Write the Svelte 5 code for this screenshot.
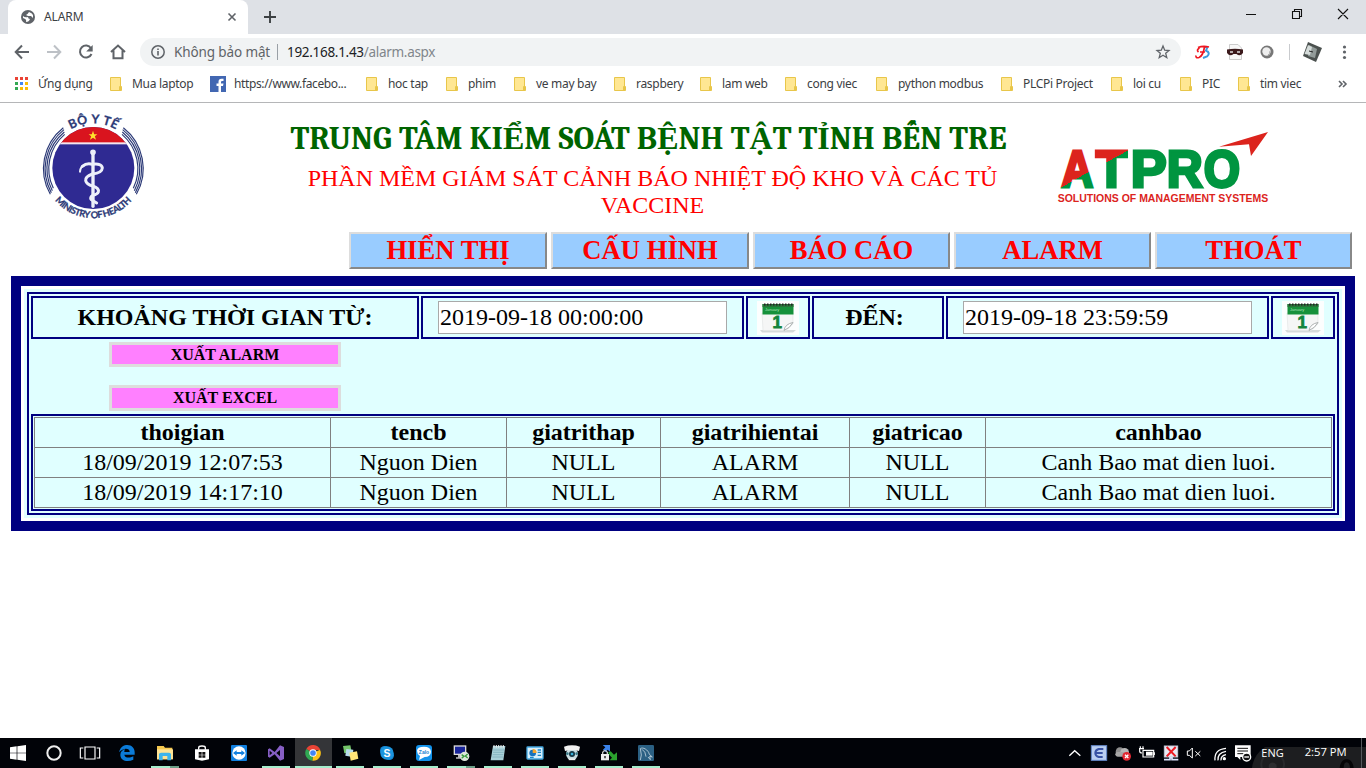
<script>
  const bookmarks = [
    { t: 'Ứng dụng', k: 'apps', w: 95, g: 23 },
    { t: 'Mua laptop', k: 'folder', w: 100, g: 22 },
    { t: 'https://www.facebo...', k: 'fb', w: 156, g: 24 },
    { t: 'hoc tap', k: 'folder', w: 80, g: 22 },
    { t: 'phim', k: 'folder', w: 68, g: 22 },
    { t: 've may bay', k: 'folder', w: 100, g: 22 },
    { t: 'raspbery', k: 'folder', w: 86, g: 22 },
    { t: 'lam web', k: 'folder', w: 85, g: 22 },
    { t: 'cong viec', k: 'folder', w: 91, g: 22 },
    { t: 'python modbus', k: 'folder', w: 125, g: 22 },
    { t: 'PLCPi Project', k: 'folder', w: 110, g: 22 },
    { t: 'loi cu', k: 'folder', w: 69, g: 22 },
    { t: 'PIC', k: 'folder', w: 58, g: 22 },
    { t: 'tim viec', k: 'folder', w: 80, g: 22 }
  ];
  const menu = ['HIỂN THỊ', 'CẤU HÌNH', 'BÁO CÁO', 'ALARM', 'THOÁT'];
  const columns = ['thoigian', 'tencb', 'giatrithap', 'giatrihientai', 'giatricao', 'canhbao'];
  const rows = [
    ['18/09/2019 12:07:53', 'Nguon Dien', 'NULL', 'ALARM', 'NULL', 'Canh Bao mat dien luoi.'],
    ['18/09/2019 14:17:10', 'Nguon Dien', 'NULL', 'ALARM', 'NULL', 'Canh Bao mat dien luoi.']
  ];
  const apps = [
    { k: 'win', w: 36 }, { k: 'cortana', w: 36 }, { k: 'taskview', w: 36 }, { k: 'edge', w: 39 },
    { k: 'explorer', w: 37, run: true, multi: true }, { k: 'store', w: 37 }, { k: 'teamviewer', w: 37 },
    { k: 'vs', w: 37, run: true }, { k: 'chrome', w: 37, run: true, active: true },
    { k: 'sticky', w: 37, run: true }, { k: 'skype', w: 37, run: true }, { k: 'zalo', w: 37, run: true },
    { k: 'remote', w: 37, run: true, multi: true }, { k: 'notepad', w: 37, run: true }, { k: 'panel', w: 37, run: true },
    { k: 'camera', w: 37, run: true }, { k: 'lock', w: 37, run: true }, { k: 'mysql', w: 37, run: true }
  ];
  const squares = ['#ea4335', '#ea4335', '#ea4335', '#34a853', '#4285f4', '#fbbc05', '#34a853', '#fbbc05', '#fbbc05'];
</script>

{#snippet calendar()}
  <svg class="cal" width="42" height="34" viewBox="0 0 42 34">
    <rect width="42" height="34" fill="#fcfefe" />
    <path d="M3 29H39L36 31.500H5Z" fill="#d5dada" />
    <path d="M5 12H36V23L29 29.500H6Z" fill="#f5f6f6" stroke="#dfe3e3" stroke-width=".6" />
    <rect x="5.500" y="3" width="31" height="10.500" fill="#16913b" />
    <rect x="5.500" y="3" width="31" height="3" fill="#28743b" />
    <path d="M7 3.500H36" stroke="#222" stroke-width="2" stroke-dasharray="1.500 1.500" />
    <text x="8" y="10" font-family="Liberation Sans" font-size="4" fill="#a9e0b8">January</text>
    <text x="15.500" y="27" font-family="Liberation Sans" font-weight="bold" font-size="17" fill="#14853c" stroke="#14853c" stroke-width=".8">1</text>
    <path d="M27 29.500Q28 23 36 21.500Q33 27 27 29.500Z" fill="#fff" stroke="#a5aaaa" stroke-width=".9" />
  </svg>
{/snippet}

{#snippet appIcon(k)}
  <svg width="16" height="16" viewBox="0 0 48 48">
    {#if k === 'win'}
      <path d="M0 7L20 4V23H0ZM22 4L48 0V23H22ZM0 25H20V44L0 41ZM22 25H48V48L22 44Z" fill="#fff" />
    {:else if k === 'cortana'}
      <circle cx="24" cy="24" r="20" fill="none" stroke="#eee" stroke-width="6" />
    {:else if k === 'taskview'}
      <path d="M9 6H39V42H9ZM4 9H-5V39H4M44 9H53V39H44" fill="none" stroke="#fff" stroke-width="3.500" />
    {:else if k === 'edge'}
      <path d="M0 22C4 5 15 0 25 0C39 0 47 10 47 22V29H16C17 38 30 41 43 34V44C26 52 4 48 4 29C4 20 11 14 19 12C17 14 16 18 16 21H32C32 8 12 8 0 22Z" fill="#0b7bd8" />
    {:else if k === 'explorer'}
      <path d="M0 3H20L24 8H46V43H0Z" fill="#f5c84f" /><path d="M0 13H48V43H0Z" fill="#ffe394" />
      <path d="M6 46V28Q6 23 12 23H36Q42 23 42 28V46H31V33H17V46Z" fill="#3db4ec" />
    {:else if k === 'store'}
      <path d="M14 14V8Q14 3 24 3T34 8V14" fill="none" stroke="#fff" stroke-width="4" />
      <path d="M3 13H45V43L24 47L3 43Z" fill="#fff" /><path d="M14 21H23V29H14ZM25 21H34V29H25ZM14 31H23V38H14ZM25 31H34V38H25Z" fill="#111" />
    {:else if k === 'teamviewer'}
      <rect width="48" height="48" rx="3" fill="#1180df" /><circle cx="24" cy="24" r="20" fill="#fff" />
      <path d="M6 24L17 16V21H31V16L42 24L31 32V27H17V32Z" fill="#1180df" />
    {:else if k === 'vs'}
      <path d="M0 13L5 10L20 21L36 1L48 6V42L36 47L20 28L5 38L0 35ZM5 17V31L13 24ZM36 15L25 24L36 34Z" fill="#865fc5" fill-rule="evenodd" />
    {:else if k === 'chrome'}
      <path d="M24 24L4 12A23 23 0 0 1 46 15H24Z" fill="#e94335" /><path d="M24 24L45 14A23 23 0 0 1 22 47Z" fill="#fbc116" />
      <path d="M24 24L22 47A23 23 0 0 1 4 12Z" fill="#30a852" /><circle cx="24" cy="24" r="11" fill="#fff" /><circle cx="24" cy="24" r="8.500" fill="#4285f4" />
    {:else if k === 'sticky'}
      <path d="M3 3L25 1L29 20L7 25Z" fill="#74c56a" /><path d="M13 12L34 14L32 36L10 32Z" fill="#b7dceb" /><path d="M22 23L45 19L49 41L26 47Z" fill="#ffe578" />
    {:else if k === 'skype'}
      <circle cx="17" cy="17" r="14" fill="#1687d5" /><circle cx="31" cy="31" r="14" fill="#1687d5" /><circle cx="24" cy="24" r="20" fill="#1b95df" />
      <text x="24" y="35" text-anchor="middle" font-family="Liberation Sans" font-size="31" font-weight="bold" fill="#fff">S</text>
    {:else if k === 'zalo'}
      <rect width="48" height="48" rx="9" fill="#1292ea" /><path d="M3 17Q4 5 24 5T45 20Q44 36 26 36L9 45L12 33Q3 27 3 17Z" fill="#fff" />
      <text x="24" y="26" text-anchor="middle" font-family="Liberation Sans" font-size="15" font-weight="bold" fill="#1680d0">Zalo</text>
    {:else if k === 'remote'}
      <rect x="2" y="1" width="38" height="29" fill="#dadada" /><rect x="6" y="5" width="30" height="21" fill="#19259a" /><path d="M15 30H28V37H35V41H9V37H15Z" fill="#bbb" />
      <circle cx="35" cy="34" r="14" fill="#dfe7dc" /><path d="M26 29L33 34L26 40M44 27L37 33L44 39" fill="none" stroke="#379b3c" stroke-width="4" />
    {:else if k === 'notepad'}
      <path d="M9 3H46L40 46H2Z" fill="#a9d0d8" /><path d="M10 15H42M9 22H41M8 29H40M7 36H40" stroke="#75a8b3" stroke-width="2" /><path d="M12 0V8M19 0V8M26 0V8M33 0V8M40 0V8" stroke="#eee" stroke-width="3" />
    {:else if k === 'panel'}
      <rect y="6" width="48" height="36" rx="2" fill="#d7effc" stroke="#43a8e0" stroke-width="4" /><circle cx="17" cy="24" r="10" fill="#1772bd" /><path d="M17 24V12A12 12 0 0 1 29 24Z" fill="#f4a42d" /><path d="M32 15H42M32 22H42M9 37H20M32 31H42" stroke="#1c87c7" stroke-width="4" />
    {:else if k === 'camera'}
      <circle cx="24" cy="27" r="18" fill="#c9dde1" /><path d="M0 5Q24 -3 48 5L45 18Q24 12 3 18Z" fill="#f2f2f2" /><circle cx="24" cy="27" r="9" fill="#153744" /><circle cx="24" cy="27" r="4" fill="#39b1db" /><circle cx="10" cy="26" r="4" fill="#367886" /><circle cx="38" cy="26" r="4" fill="#367886" /><path d="M14 43H34" stroke="#eee" stroke-width="5" />
    {:else if k === 'lock'}
      <path d="M5 0H27V20L20 14L13 21L6 14L13 7Z" fill="#3a83eb" /><path d="M22 22L29 19L39 29L48 22V46H26L33 38L23 28Z" fill="#2ba22e" />
      <path d="M5 28V22Q12 12 19 22V28" fill="none" stroke="#c6c6c6" stroke-width="4" /><rect x="0" y="27" width="24" height="19" fill="#eee" /><path d="M12 33V40" stroke="#111" stroke-width="4" />
    {:else}
      <rect width="48" height="48" rx="4" fill="#2b6083" /><path d="M7 45Q13 32 7 11C14 5 31 14 34 28L43 36L35 34L37 44L30 36M12 13Q23 19 24 35" fill="none" stroke="#c2d4df" stroke-width="2.500" />
    {/if}
  </svg>
{/snippet}

<div class="screen">
  <div class="strip">
    <div class="tab">
      <svg width="14" height="14" viewBox="0 0 14 14"><circle cx="7" cy="7" r="7" fill="#5f6368" /><path d="M2 6Q4 8 7 7Q7 9 9 9Q8 12 5 12Q6 9 2 8ZM8 2Q7 4 5 5L7 6L10 6L12 8V5Q11 3 8 2Z" fill="#fff" /></svg>
      <span class="tabname">ALARM</span>
      <svg width="10" height="10" viewBox="0 0 10 10"><path d="M1.500 1.500L8.500 8.500M8.500 1.500L1.500 8.500" stroke="#5f6368" stroke-width="1.600" /></svg>
    </div>
    <svg class="plus" width="12" height="12" viewBox="0 0 12 12"><path d="M6 0V12M0 6H12" stroke="#3c4043" stroke-width="1.900" /></svg>
    <svg class="winctl" width="120" height="30" viewBox="0 0 120 30"><path d="M10 14.500H20M56.500 11.500H63.500V18.500H56.500ZM58.500 11V9.500H65.500V16.500H64M102 9L112 19M112 9L102 19" fill="none" stroke="#111" stroke-width="1.100" /></svg>
  </div>

  <div class="toolbar">
    <svg class="navicons" width="132" height="36" viewBox="0 0 132 36">
      <g fill="none" stroke-width="2"><path d="M29 18H16M22 11.500L15.700 18L22 24.500" stroke="#5f6368" /><path d="M47 18H60M54 11.500L60.300 18L54 24.500" stroke="#bdc1c6" />
      <path d="M91 14.200A6 6 0 1 0 91.500 20" stroke="#5f6368" /><path d="M111 18L118 11.500L125 18M113.500 16.500V24.300H122.500V16.500" stroke="#5f6368" /></g>
      <path d="M92.700 11V17.500H86.200Z" fill="#5f6368" />
    </svg>
    <div class="omni">
      <svg width="14" height="14" viewBox="0 0 14 14"><circle cx="7" cy="7" r="6.200" fill="none" stroke="#5f6368" stroke-width="1.500" /><path d="M7 6V10.500M7 3.500V5" stroke="#5f6368" stroke-width="1.600" /></svg>
      <span class="insecure">Không bảo mật</span><i></i><span class="url">192.168.1.43<em>/alarm.aspx</em></span>
      <svg class="star" width="14" height="14" viewBox="0 0 14 14"><path d="M7 1L8.700 5.200L13 5.500L9.700 8.300L10.800 12.700L7 10.300L3.200 12.700L4.300 8.300L1 5.500L5.300 5.200Z" fill="none" stroke="#5f6368" stroke-width="1.300" /></svg>
    </div>
    <svg class="exts" width="185" height="36" viewBox="1181 34 185 36">
      <path d="M1204 47.500Q1209 45.500 1206 50.500Q1211 53 1207 56.500L1203 58" fill="none" stroke="#3c9bdd" stroke-width="2" />
      <path d="M1198 47.500Q1203 45.500 1209 47M1204.500 47Q1203 56 1199 57.500Q1195.500 58.500 1196 55.500M1199.500 48Q1196 50 1198.500 52M1200 52H1205" fill="none" stroke="#ef1620" stroke-width="1.700" />
      <path d="M1229.500 44.500H1238L1241.500 48V59.500H1229.500Z" fill="#f8f8f8" stroke="#ccc" /><path d="M1227 49.500Q1235 48 1243 49.500V53Q1240 57 1236.500 54H1233.500Q1230 57 1227 53Z" fill="#3c1a1c" /><path d="M1230 52H1233M1237 52H1240" stroke="#ddd" stroke-width="1.500" />
      <circle cx="1267" cy="52" r="6.500" fill="#777" /><circle cx="1266.500" cy="51.500" r="4.200" fill="#eee" /><path d="M1268 55Q1270 54 1270 51" stroke="#aaa" fill="none" />
      <path d="M1289.500 44V60" stroke="#c9cbce" /><path d="M1308 42L1322 48L1316 62L1303 56Z" fill="#4b514f" /><path d="M1309 45L1317 49L1315 58L1308 56Z" fill="#929b99" /><path d="M1308 45L1312 47L1310 55L1304.500 54Z" fill="#d5dcda" /><path d="M1309 51L1313 52" stroke="#222" />
      <circle cx="1344.500" cy="47" r="1.600" fill="#5f6368" /><circle cx="1344.500" cy="52" r="1.600" fill="#5f6368" /><circle cx="1344.500" cy="57.500" r="1.600" fill="#5f6368" />
    </svg>
  </div>

  <div class="bookmarks">
    {#each bookmarks as b}
      <div class="bm" class:link={b.k === 'fb'} style="width:{b.w}px">
        <span class="bi" style="width:{b.g}px">
          {#if b.k === 'apps'}
            <svg width="13" height="13" viewBox="0 0 13 13">{#each squares as c, i}<rect x={(i % 3) * 5} y={Math.floor(i / 3) * 5} width="3" height="3" fill={c} />{/each}</svg>
          {:else if b.k === 'fb'}
            <svg width="16" height="16" viewBox="0 0 16 16"><rect width="16" height="16" fill="#4267b2" /><path d="M8.500 16V10H6.500V7.500H8.500V6Q8.500 2.700 11.500 2.700H13.500V5H12Q11 5 11 6.200V7.500H13.500L13 10H11V16Z" fill="#fff" /></svg>
          {:else}
            <svg width="13" height="14" viewBox="0 0 13 14"><path d="M.5.500H10.500V13.500H.5ZM9.500 9.500H11.500V13.500H9.500Z" fill="#ffe793" stroke="#e8c64a" /></svg>
          {/if}
        </span>{b.t}
      </div>
    {/each}
    <svg class="more" width="9" height="8" viewBox="0 0 9 8"><path d="M1 1L4 4L1 7M5 1L8 4L5 7" fill="none" stroke="#5f6368" stroke-width="1.600" /></svg>
  </div>

  <div class="page">
    <header>
      <svg class="moh" width="150" height="124" viewBox="0 0 450 372">
        <defs>
          <clipPath id="disc"><circle cx="220" cy="192" r="123" /></clipPath>
          <path id="arcTop" d="M114 110A134 134 0 0 1 326 110" />
          <path id="arcBottom" d="M81 252A152 152 0 0 0 359 252" />
        </defs>
        <g clip-path="url(#disc)"><rect x="95" y="65" width="250" height="255" fill="#2f2a92" /><rect x="95" y="65" width="250" height="52" fill="#d9141e" /><rect x="95" y="115" width="250" height="6" fill="#f4e4ee" /></g>
        <path d="M219 80L222.500 91H232L224.500 97L228 107L219 101L210 107L213.500 97L206 91H215.500Z" fill="#ffe02c" />
        <g fill="none" stroke="#2c3a77" stroke-width="3.500"><path d="M130 71A156 156 0 0 0 91 271M132 77A149 149 0 0 0 94 266M133 84A142 142 0 0 0 97 260M134 91A135 135 0 0 0 100 253" /><path d="M310 71A156 156 0 0 1 349 271M308 77A149 149 0 0 1 346 266M307 84A142 142 0 0 1 343 260M306 91A135 135 0 0 1 340 253" /></g>
        <g fill="none" stroke="#edf0fa" stroke-linecap="round"><path d="M219 150V307" stroke-width="10" /><circle cx="219" cy="145" r="4" stroke-width="9" /><path d="M187 187Q200 176 217 181Q245 177 247 192Q246 207 217 210Q195 218 197 230Q200 242 218 246Q238 252 235 264Q232 271 219 274Q208 280 214 287L230 297" stroke-width="9" /><path d="M180 203Q182 186 193 184" stroke-width="6" /></g>
        <g fill="#2c3a77" stroke="#2c3a77" stroke-width=".8" font-family="Lato, sans-serif"><text font-weight="bold" font-size="37"><textPath href="#arcTop" startOffset="50%" text-anchor="middle" textLength="142">BỘ Y TẾ</textPath></text>
        <text font-weight="bold" font-size="28"><textPath href="#arcBottom" startOffset="50%" text-anchor="middle" textLength="262">MINISTRY OF HEALTH</textPath></text></g>
      </svg>
      <div class="titles">
        <h1>TRUNG TÂM KIỂM SOÁT BỆNH TẬT TỈNH BẾN TRE</h1>
        <h2>PHẦN MỀM GIÁM SÁT CẢNH BÁO NHIỆT ĐỘ KHO VÀ CÁC TỦ<br />VACCINE</h2>
      </div>
      <svg class="atpro" width="250" height="95" viewBox="0 0 750 285">
        <defs>
          <linearGradient id="ga" gradientUnits="userSpaceOnUse" x1="100" y1="160" x2="119" y2="193"><stop offset=".5" stop-color="#dc241d" /><stop offset=".5" stop-color="#009540" /></linearGradient>
          <linearGradient id="gt" gradientUnits="userSpaceOnUse" x1="222" y1="93" x2="240" y2="126"><stop offset=".5" stop-color="#dc241d" /><stop offset=".5" stop-color="#009540" /></linearGradient>
        </defs>
        <g font-family="Liberation Sans, Arial, sans-serif" font-weight="bold" font-size="155" stroke-width="9">
          <text x="64" y="200" textLength="96" lengthAdjust="spacingAndGlyphs" fill="url(#ga)" stroke="url(#ga)">A</text>
          <text x="167" y="200" textLength="94" lengthAdjust="spacingAndGlyphs" fill="url(#gt)" stroke="url(#gt)">T</text>
          <text x="272" y="200" textLength="108" lengthAdjust="spacingAndGlyphs" fill="#009540" stroke="#009540">P</text>
          <text x="380" y="200" textLength="108" lengthAdjust="spacingAndGlyphs" fill="#009540" stroke="#009540">R</text>
          <text x="491" y="200" textLength="109" lengthAdjust="spacingAndGlyphs" fill="#009540" stroke="#009540">O</text>
        </g>
        <path d="M537 80L684 36L633 108L627 73Z" fill="#dc241d" />
        <text x="53" y="245" font-family="Liberation Sans, Arial, sans-serif" font-weight="bold" font-size="31" fill="#dc241d" textLength="632" lengthAdjust="spacingAndGlyphs">SOLUTIONS OF MANAGEMENT SYSTEMS</text>
      </svg>
    </header>

    <nav>{#each menu as m}<button>{m}</button>{/each}</nav>

    <div class="frame"><div class="tint"><div class="box">
      <div class="filters">
        <div class="cell"><b>KHOẢNG THỜI GIAN TỪ:</b></div>
        <div class="cell"><input value="2019-09-18 00:00:00" /></div>
        <div class="cell">{@render calendar()}</div>
        <div class="cell to"><b>ĐẾN:</b></div>
        <div class="cell"><input value="2019-09-18 23:59:59" /></div>
        <div class="cell">{@render calendar()}</div>
      </div>
      <div class="actions"><button class="first">XUẤT ALARM</button><button>XUẤT EXCEL</button></div>
      <div class="grid">
        <table>
          <colgroup><col style="width:296px" /><col style="width:176px" /><col style="width:154px" /><col style="width:189px" /><col style="width:136px" /><col style="width:346px" /></colgroup>
          <tbody>
            <tr>{#each columns as c}<th>{c}</th>{/each}</tr>
            {#each rows as r}<tr>{#each r as v}<td>{v}</td>{/each}</tr>{/each}
          </tbody>
        </table>
      </div>
    </div></div></div>
  </div>

  <footer>
    {#each apps as a}
      <div class="app" class:active={a.active} class:run={a.run} class:multi={a.multi} style="width:{a.w}px">{@render appIcon(a.k)}</div>
    {/each}
    <svg class="tray" width="316" height="30" viewBox="0 9 948 90">
      <path d="M606 99Q610 60 645 36H948V99Z" fill="#1d1e20" /><path d="M636 99A34 34 0 1 1 700 99" fill="none" stroke="#292a2c" stroke-width="6" /><path d="M657 99A12 12 0 1 1 679 99Z" fill="#2d2e30" />
      <path d="M58 62L74 47L91 62" fill="none" stroke="#fff" stroke-width="4" />
      <rect x="124" y="32" width="46" height="44" fill="#b9cef1" stroke="#6388cb" stroke-width="3" /><path d="M160 42H146Q136 45 136 54T146 66H158M137 54H158" fill="none" stroke="#3953a5" stroke-width="6" />
      <circle cx="210" cy="50" r="13" fill="#8e8e8e" /><circle cx="224" cy="52" r="13" fill="#b7b7b7" /><rect x="196" y="51" width="33" height="14" rx="7" fill="#a7a7a7" /><circle cx="230" cy="64" r="13" fill="#e32832" /><path d="M225 59L235 69M235 59L225 69" stroke="#fff" stroke-width="4" />
      <path d="M279 46H311V66H279ZM313 52V60M269 39V48Q269 54 276 54M267 41H282M271 34V40M279 34V40" fill="none" stroke="#fff" stroke-width="3.500" /><rect x="288" y="50" width="20" height="12" fill="#fff" />
      <rect x="343" y="33" width="40" height="33" fill="#e9eaf4" stroke="#c3c7d6" stroke-width="3" /><path d="M350 36L377 64M377 36L350 64" stroke="#ec1b23" stroke-width="6" /><path d="M342 74H360V68H366V74H385" fill="none" stroke="#dce4ff" stroke-width="5" />
      <path d="M412 48H418L427 39V69L418 61H412ZM436 49L451 63M451 49L436 63" fill="none" stroke="#fff" stroke-width="3" />
      <g fill="none" stroke="#fff" stroke-width="4"><path d="M495 76Q492 43 528 40M504 76Q502 53 528 49M513 76Q512 62 528 59" /><circle cx="523" cy="71" r="3" fill="#fff" /></g>
      <path d="M555 31H602V66H571V75L562 66H555Z" fill="#fff" /><path d="M562 40H594M562 48H594M562 56H580" stroke="#111" stroke-width="3" /><circle cx="590" cy="66" r="12" fill="#111" stroke="#fff" stroke-width="4" /><path d="M583 66H597" stroke="#fff" stroke-width="4" />
      <g fill="#fff" font-family="Open Sans, Noto Sans, sans-serif" font-size="35"><text x="634" y="66" textLength="67" lengthAdjust="spacingAndGlyphs">ENG</text><text x="764" y="64" textLength="126" lengthAdjust="spacingAndGlyphs">2:57 PM</text></g>
      <path d="M869 99Q872 73 890 73T911 99H900Q899 82 890 82T881 99Z" fill="#050506" />
      <path d="M934.500 9V99" stroke="#55585c" stroke-width="3" />
    </svg>
  </footer>
</div>

<style>
  :global(body) { margin: 0; overflow: hidden; background: #fff; }
  * { box-sizing: border-box; }
  svg { display: block; flex: none; overflow: visible; }
  .screen { width: 1366px; height: 768px; display: flex; flex-direction: column; background: #fff; overflow: hidden; font: 12px "Noto Sans", "Open Sans", sans-serif; color: #3c4043; }
  .strip { height: 34px; flex: none; display: flex; background: #dee1e6; padding-left: 8px; }
  .tab { width: 240px; height: 34px; background: #fff; border-radius: 8px 8px 0 0; display: flex; align-items: center; padding: 0 11px 0 13px; }
  .tabname { flex: 1; margin: -2px 0 0 9px; font-size: 12px; letter-spacing: -.1px; }
  .plus { margin: 11px 0 0 16px; }
  .winctl { margin-left: auto; margin-right: 10px; }
  .toolbar { height: 36px; flex: none; display: flex; align-items: center; }
  .navicons { margin-right: 8px; }
  .omni { width: 1041px; height: 28px; border-radius: 14px; background: #f1f3f4; display: flex; align-items: center; padding: 0 11px; font-size: 13.500px; }
  .insecure { margin-left: 9px; width: 103px; color: #5f6368; white-space: nowrap; letter-spacing: -.12px; }
  .omni i { width: 1px; height: 16px; background: #9aa0a6; margin-right: 9px; }
  .url { color: #202124; letter-spacing: -.3px; }
  .url em { font-style: normal; color: #80868b; }
  .star { margin-left: auto; }
  .bookmarks { height: 33px; flex: none; display: flex; align-items: center; padding: 0 0 5px 15px; border-bottom: 1px solid #b5b6b8; }
  .bm { flex: none; display: flex; align-items: center; white-space: nowrap; letter-spacing: -.3px; }
  .bm.link { letter-spacing: -.37px; }
  .bi { flex: none; }
  .more { margin-left: 20px; }
  .page { flex: 1; font-family: "Liberation Serif", "Times New Roman", serif; color: #000; }
  header { display: flex; height: 129px; padding-left: 20px; }
  .moh { margin-top: 1px; }
  .titles { width: 870px; text-align: center; padding-top: 17px; }
  h1, h2 { margin: 0; width: 783px; white-space: nowrap; }
  h1 { font: bold 32px/38px Cambria, Caladea, "Liberation Serif", serif; letter-spacing: .04px; color: #006400; margin-left: 87px; }
  h2 { font-size: 24px; font-weight: normal; line-height: 27px; color: #f00; margin: 7px 0 0 91px; }
  .atpro { margin-top: 17px; }
  nav { display: grid; grid-template-columns: 198px 198px 197px 197px 197px; gap: 4px; padding-left: 349px; height: 37px; }
  nav button { padding: 0 0 2px; border: 2px solid; border-color: #ddd #888 #888 #ddd; background: #9cf; color: #f00; font: bold 26.667px/30px "Liberation Serif", "Times New Roman", serif; }
  .frame { margin: 7px 11px 0; height: 255px; border: 10px solid #000080; padding: 3px; background: #fff; }
  .tint { height: 229px; padding: 3px; background: #e0ffff; }
  .box { height: 223px; border: 2px solid #000080; padding: 2px; }
  .filters { display: grid; grid-template-columns: 388px 323px 64px 132px 323px 64px; gap: 2px; height: 43px; font-size: 24px; }
  .cell { border: 2px solid #000080; display: flex; align-items: center; justify-content: center; white-space: nowrap; }
  .to { padding-right: 7px; }
  input { width: 289px; height: 33px; border: 1px solid #a9a9a9; padding: 1px; font: 24px "Liberation Serif", "Times New Roman", serif; color: #000; background: #fff; outline: 0; border-radius: 0; }
  .actions { height: 75px; padding: 3px 0 0 78px; display: flex; flex-direction: column; gap: 18px; }
  .actions button { width: 232px; height: 26px; padding: 0; border: 3px solid #ddd; background: #ff80ff; color: #000; font: bold 16px/18px "Liberation Serif", "Times New Roman", serif; }
  .actions .first { height: 25px; }
  .grid { height: 97px; border: 2px solid #000080; padding: 1px; }
  table { width: 1298px; height: 91px; table-layout: fixed; border-collapse: collapse; font-size: 24px; line-height: 27px; }
  th, td { height: 30px; border: 1px solid #808080; padding: 0; text-align: center; }
  footer { height: 30px; flex: none; display: flex; background: #010308; }
  .app { flex: none; height: 30px; padding-left: 10px; display: flex; align-items: center; background-repeat: no-repeat; }
  .app:nth-child(4) { padding-left: 11px; }
  .app.run { background-image: linear-gradient(#a5edcc, #a5edcc); background-size: 28px 2px; background-position: 4px 100%; }
  .app.run.multi { background-image: linear-gradient(90deg, #a5edcc 68%, #6b9e87 68%); }
  .app.active { background-color: #343538; background-size: 100% 2px; background-position: 0 100%; }
  .tray { margin-left: auto; }
</style>
